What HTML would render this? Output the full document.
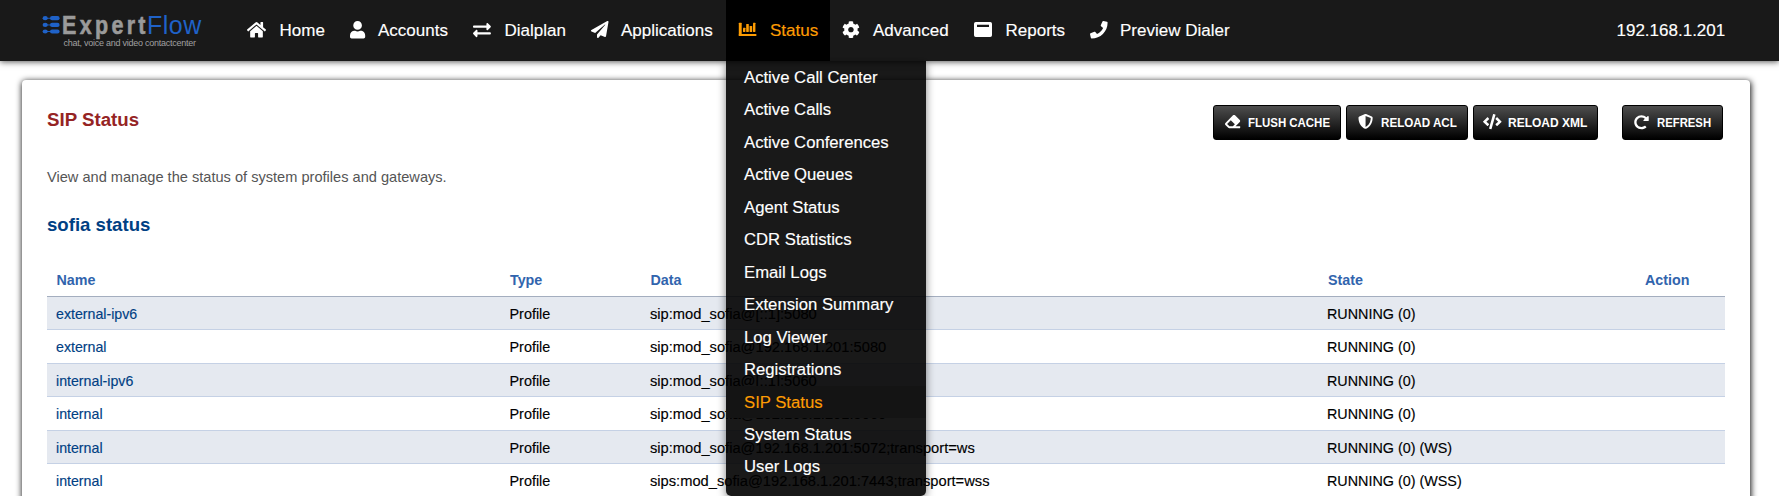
<!DOCTYPE html>
<html><head><meta charset="utf-8">
<style>
html,body{margin:0;padding:0;}
body{width:1779px;height:496px;overflow:hidden;background:#fff;position:relative;font-family:"Liberation Sans",sans-serif;}
div{position:absolute;white-space:nowrap;}
.ic{position:absolute;fill:#fff;overflow:visible;}
#nav{left:0;top:0;width:1779px;height:61px;background:rgba(0,0,0,0.9);box-shadow:0 1px 6px rgba(0,0,0,0.65);z-index:5;}
#nav .nt{top:21px;line-height:20px;font-size:17px;color:#fff;-webkit-text-stroke:0.15px currentColor;}
#active{left:726px;top:0;width:104px;height:61px;background:#000;}
#card{left:22px;top:80px;width:1728px;height:600px;background:#fff;border-radius:4px;box-shadow:0.5px 1px 6px rgba(0,0,0,0.95);}
.title{left:47px;top:110px;font-size:18.7px;line-height:20px;font-weight:bold;color:#952424;}
.desc{left:47px;top:169px;font-size:14.6px;line-height:16px;color:#555;}
.sofia{left:47px;top:215px;font-size:18.6px;line-height:20px;font-weight:bold;color:#004083;}
.btn{top:105px;height:35px;box-sizing:border-box;border:1px solid #000;border-radius:3px;background:linear-gradient(#4e4e4e,#000);}
.bt{top:115px;line-height:16px;font-size:13px;font-weight:bold;color:#fff;transform-origin:0 0;}
.th{top:271.5px;line-height:16px;font-size:14.3px;font-weight:bold;color:#3164ad;}
.hb{left:47px;top:296px;width:1678px;height:1px;background:#a4aebf;}
.rowbg{left:47px;width:1678px;background:#e5e9f0;}
.rowbd{left:47px;width:1678px;height:1px;background:#c5d1e5;}
.td{line-height:16px;font-size:14.3px;color:#000;-webkit-text-stroke:0.15px currentColor;}
#dd{left:726px;top:61px;width:200px;height:435px;background:rgba(0,0,0,0.9);border-radius:0 0 5px 5px;box-shadow:0 2px 8px rgba(0,0,0,0.5);z-index:4;}
.di{left:18px;font-size:16.7px;color:#fff;line-height:20px;-webkit-text-stroke:0.15px currentColor;}
.ddact{left:0;width:200px;height:32.47px;background:#141414;}
</style></head><body>
<div id="card"></div>
<div class="title">SIP Status</div>
<div class="desc">View and manage the status of system profiles and gateways.</div>
<div class="sofia">sofia status</div>
<div class="btn" style="left:1213px;width:128px"></div><svg class="ic" style="left:1224.8px;top:114.06px;" width="15.2" height="15.09" viewBox="0 0 512 512" preserveAspectRatio="none"><path d="M497.941 273.941c18.745-18.745 18.745-49.137 0-67.882l-160-160c-18.745-18.745-49.136-18.746-67.883 0l-256 256c-18.745 18.745-18.745 49.137 0 67.882l96 96A48.004 48.004 0 0 0 144 480h356c6.627 0 12-5.373 12-12v-40c0-6.627-5.373-12-12-12H355.883l142.058-142.059zm-302.627-62.627l137.373 137.373L265.373 416H150.628l-80-80 124.686-124.686z"/></svg><div class="bt" style="left:1248.1px;transform:scaleX(0.8804)">FLUSH CACHE</div><div class="btn" style="left:1346px;width:122px"></div><svg class="ic" style="left:1358.43px;top:114.4px;" width="15.15" height="14.8" viewBox="0 0 512 512" preserveAspectRatio="none"><path d="M466.5 83.7l-192-80a48.15 48.15 0 0 0-36.9 0l-192 80C27.7 91.1 16 108.6 16 128c0 198.5 114.5 335.7 221.5 380.3 11.8 4.9 25.1 4.9 36.9 0C360.1 472.6 496 349.3 496 128c0-19.4-11.7-36.9-29.5-44.3zM256.1 446.3l-.1-381 175.9 73.3c-3.3 151.4-82.1 261.1-175.8 307.7z"/></svg><div class="bt" style="left:1380.8999999999999px;transform:scaleX(0.8952)">RELOAD ACL</div><div class="btn" style="left:1473px;width:125px"></div><svg class="ic" style="left:1483.4px;top:114.2px;" width="18.6" height="15.3" viewBox="0 0 640 512" preserveAspectRatio="none"><path d="M278.9 511.5l-61-17.7c-6.4-1.8-10-8.5-8.2-14.9L346.2 8.7c1.8-6.4 8.5-10 14.9-8.2l61 17.7c6.4 1.8 10 8.5 8.2 14.9L293.8 503.3c-1.9 6.4-8.5 10.1-14.9 8.2zm-114-112.2l43.5-46.4c4.6-4.9 4.3-12.7-.8-17.2L117 256l90.6-79.7c5.1-4.5 5.5-12.3.8-17.2l-43.5-46.4c-4.5-4.8-12.1-5.1-17-.5L3.8 247.2c-5.1 4.7-5.1 12.8 0 17.5l144.1 135.1c4.9 4.6 12.5 4.4 17-.5zm327.2.6l144.1-135.1c5.1-4.7 5.1-12.8 0-17.5L492.1 112.1c-4.8-4.5-12.4-4.3-17 .5L431.6 159c-4.6 4.9-4.3 12.7.8 17.2L523 256l-90.6 79.7c-5.1 4.5-5.5 12.3-.8 17.2l43.5 46.4c4.5 4.9 12.1 5.1 17 .6z"/></svg><div class="bt" style="left:1508.1px;transform:scaleX(0.9224)">RELOAD XML</div><div class="btn" style="left:1622px;width:101px"></div><svg class="ic" style="left:1634.47px;top:114.77px;" width="14.97" height="14.45" viewBox="0 0 512 512" preserveAspectRatio="none"><path d="M256.455 8c66.269.119 126.437 26.233 170.859 68.685l35.715-35.715C478.149 25.851 504 36.559 504 57.941V192c0 13.255-10.745 24-24 24H345.941c-21.382 0-32.09-25.851-16.971-40.971l41.75-41.75c-30.864-28.899-70.801-44.907-113.23-45.273-92.398-.798-170.283 73.977-169.484 169.442C88.764 348.009 162.184 424 256 424c41.127 0 79.997-14.678 110.629-41.556 4.743-4.161 11.906-3.908 16.368.553l39.662 39.662c4.872 4.872 4.631 12.815-.482 17.433C378.202 479.813 319.926 504 256 504 119.034 504 8.001 392.967 8 256.002 7.999 119.193 119.646 7.755 256.455 8z"/></svg><div class="bt" style="left:1657.1999999999998px;transform:scaleX(0.8705)">REFRESH</div>
<div class="th" style="left:56.5px">Name</div>
<div class="th" style="left:510px">Type</div>
<div class="th" style="left:650.5px">Data</div>
<div class="th" style="left:1328px">State</div>
<div class="th" style="left:1645px">Action</div>
<div class="hb"></div>
<div class="rowbg" style="top:297px;height:32px"></div><div class="rowbd" style="top:329px"></div><div class="rowbd" style="top:363px"></div><div class="rowbg" style="top:364px;height:32px"></div><div class="rowbd" style="top:396px"></div><div class="rowbd" style="top:430px"></div><div class="rowbg" style="top:431px;height:32px"></div><div class="rowbd" style="top:463px"></div><div class="rowbd" style="top:497px"></div>
<div class="td" style="left:56px;top:306.00px;color:#004083;font-size:14.2px">external-ipv6</div><div class="td" style="left:509.5px;top:306.00px;font-size:14.4px">Profile</div><div class="td" style="left:650px;top:306.00px;font-size:14.7px">sip:mod_sofia@[::1]:5080</div><div class="td" style="left:1327px;top:306.00px;font-size:14.35px">RUNNING (0)</div><div class="td" style="left:56px;top:339.40px;color:#004083;font-size:14.2px">external</div><div class="td" style="left:509.5px;top:339.40px;font-size:14.4px">Profile</div><div class="td" style="left:650px;top:339.40px;font-size:14.7px">sip:mod_sofia@192.168.1.201:5080</div><div class="td" style="left:1327px;top:339.40px;font-size:14.35px">RUNNING (0)</div><div class="td" style="left:56px;top:372.80px;color:#004083;font-size:14.2px">internal-ipv6</div><div class="td" style="left:509.5px;top:372.80px;font-size:14.4px">Profile</div><div class="td" style="left:650px;top:372.80px;font-size:14.7px">sip:mod_sofia@[::1]:5060</div><div class="td" style="left:1327px;top:372.80px;font-size:14.35px">RUNNING (0)</div><div class="td" style="left:56px;top:406.30px;color:#004083;font-size:14.2px">internal</div><div class="td" style="left:509.5px;top:406.30px;font-size:14.4px">Profile</div><div class="td" style="left:650px;top:406.30px;font-size:14.7px">sip:mod_sofia@192.168.1.201:5060</div><div class="td" style="left:1327px;top:406.30px;font-size:14.35px">RUNNING (0)</div><div class="td" style="left:56px;top:439.80px;color:#004083;font-size:14.2px">internal</div><div class="td" style="left:509.5px;top:439.80px;font-size:14.4px">Profile</div><div class="td" style="left:650px;top:439.80px;font-size:14.7px">sip:mod_sofia@192.168.1.201:5072;transport=ws</div><div class="td" style="left:1327px;top:439.80px;font-size:14.35px">RUNNING (0) (WS)</div><div class="td" style="left:56px;top:473.20px;color:#004083;font-size:14.2px">internal</div><div class="td" style="left:509.5px;top:473.20px;font-size:14.4px">Profile</div><div class="td" style="left:650px;top:473.20px;font-size:14.7px">sips:mod_sofia@192.168.1.201:7443;transport=wss</div><div class="td" style="left:1327px;top:473.20px;font-size:14.35px">RUNNING (0) (WSS)</div>
<div id="nav">
  <div id="active"></div>
  <svg class="ic" style="left:42px;top:15px" width="20" height="20" viewBox="0 0 20 20">
    <g fill="#1f62c8">
      <ellipse cx="3.2" cy="3.2" rx="2.6" ry="2.1"/><rect x="8" y="1.1" width="9.6" height="4.2" rx="2.1"/><rect x="5" y="2.8" width="4" height="0.9"/>
      <ellipse cx="3.2" cy="9.9" rx="2.6" ry="2.1"/><rect x="8" y="7.8" width="9.6" height="4.2" rx="2.1"/><rect x="5" y="9.5" width="4" height="0.9"/>
      <ellipse cx="3.2" cy="16.5" rx="2.6" ry="2.1"/><rect x="8" y="14.4" width="9.6" height="4.2" rx="2.1"/><rect x="5" y="16.1" width="4" height="0.9"/>
    </g>
  </svg>
  <div style="left:62.3px;top:9.5px;font-size:25px;line-height:30px;font-weight:bold;color:#9a9a9a;letter-spacing:3.86px;-webkit-text-stroke:0.6px #9a9a9a;transform:scaleX(0.86);transform-origin:0 0;">Expert</div><div style="left:147.0px;top:9.5px;font-size:25px;line-height:30px;color:#1f62c8;letter-spacing:0.5px">Flow</div>
  <div style="left:63.5px;top:38px;font-size:9px;line-height:11px;letter-spacing:-0.25px;color:#a0a0a0;">chat, voice and video contactcenter</div>
  <svg class="ic" style="left:247.0px;top:20.61px;" width="19.0" height="17.49" viewBox="0 0 576 512" preserveAspectRatio="none"><path d="M280.37 148.26L96 300.11V464a16 16 0 0 0 16 16l112.06-.29a16 16 0 0 0 15.92-16V368a16 16 0 0 1 16-16h64a16 16 0 0 1 16 16v95.64a16 16 0 0 0 16 16.05L464 480a16 16 0 0 0 16-16V300L295.67 148.26a12.19 12.19 0 0 0-15.3 0zM571.6 251.47L488 182.56V44.05a12 12 0 0 0-12-12h-56a12 12 0 0 0-12 12v72.61L318.47 43a48 48 0 0 0-61 0L4.34 251.47a12 12 0 0 0-1.6 16.9l25.5 31A12 12 0 0 0 45.15 301l235.22-193.74a12.19 12.19 0 0 1 15.3 0L530.9 301a12 12 0 0 0 16.9-1.6l25.5-31a12 12 0 0 0-1.7-16.93z"/></svg><svg class="ic" style="left:349.8px;top:20.9px;" width="15.2" height="17.5" viewBox="0 0 448 512" preserveAspectRatio="none"><path d="M224 256c70.7 0 128-57.3 128-128S294.7 0 224 0 96 57.3 96 128s57.3 128 128 128zm89.6 32h-16.7c-22.2 10.2-46.9 16-72.9 16s-50.6-5.8-72.9-16h-16.7C60.2 288 0 348.2 0 422.4V464c0 26.5 21.5 48 48 48h352c26.5 0 48-21.5 48-48v-41.6c0-74.2-60.2-134.4-134.4-134.4z"/></svg><svg class="ic" style="left:473.2px;top:20.74px;" width="17.9" height="18.12" viewBox="0 0 512 512" preserveAspectRatio="none"><path d="M0 168v-16c0-13.255 10.745-24 24-24h360V80c0-21.367 25.899-32.042 40.971-16.971l80 80c9.372 9.373 9.372 24.569 0 33.941l-80 80C409.956 271.982 384 261.456 384 240v-48H24c-13.255 0-24-10.745-24-24zm488 152H128v-48c0-21.314-25.862-32.08-40.971-16.971l-80 80c-9.372 9.373-9.372 24.569 0 33.941l80 80C102.057 463.997 128 453.437 128 432v-48h360c13.255 0 24-10.745 24-24v-16c0-13.255-10.745-24-24-24z"/></svg><svg class="ic" style="left:590.8px;top:21.0px;" width="17.5" height="17.0" viewBox="0 0 512 512" preserveAspectRatio="none"><path d="M476 3.2L12.5 270.6c-18.1 10.4-15.8 35.6 2.2 43.2L121 358.4l287.3-253.2c5.5-4.9 13.3 2.6 8.6 8.3L176 407v80.5c0 23.6 28.5 32.9 42.5 15.8L282 426l124.6 52.2c14.2 6 30.4-2.9 33-18.2l72-432C515 7.8 493.3-6.8 476 3.2z"/></svg><svg class="ic" style="left:738px;top:22px;fill:#fd9c03" width="20" height="15" viewBox="0 0 20 15"><rect x="0.8" y="0.8" width="2.9" height="13.1" rx="0.5"/><rect x="0.8" y="12.1" width="17.6" height="1.8" rx="0.5"/><rect x="5" y="5.8" width="2.4" height="4.2" rx="0.4"/><rect x="8.2" y="1.9" width="2.6" height="8.1" rx="0.4"/><rect x="11.6" y="4" width="2.6" height="6" rx="0.4"/><rect x="15" y="0.8" width="2.4" height="9.2" rx="0.4"/></svg><svg class="ic" style="left:842.41px;top:20.93px;" width="17.89" height="17.34" viewBox="0 0 512 512" preserveAspectRatio="none"><path d="M487.4 315.7l-42.6-24.6c4.3-23.2 4.3-47 0-70.2l42.6-24.6c4.9-2.8 7.1-8.6 5.5-14-11.1-35.6-30-67.8-54.7-94.6-3.8-4.1-10-5.1-14.8-2.3L380.8 110c-17.9-15.4-38.5-27.3-60.8-35.1V25.8c0-5.6-3.9-10.5-9.4-11.7-36.7-8.2-74.3-7.8-109.2 0-5.5 1.2-9.4 6.1-9.4 11.7V75c-22.2 7.9-42.8 19.8-60.8 35.1L88.7 85.5c-4.9-2.8-11-1.9-14.8 2.3-24.7 26.7-43.6 58.9-54.7 94.6-1.7 5.4.6 11.2 5.5 14L67.3 221c-4.3 23.2-4.3 47 0 70.2l-42.6 24.6c-4.9 2.8-7.1 8.6-5.5 14 11.1 35.6 30 67.8 54.7 94.6 3.8 4.1 10 5.1 14.8 2.3l42.6-24.6c17.9 15.4 38.5 27.3 60.8 35.1v49.2c0 5.6 3.9 10.5 9.4 11.7 36.7 8.2 74.3 7.8 109.2 0 5.5-1.2 9.4-6.1 9.4-11.7v-49.2c22.2-7.9 42.8-19.8 60.8-35.1l42.6 24.6c4.9 2.8 11 1.9 14.8-2.3 24.7-26.7 43.6-58.9 54.7-94.6 1.5-5.5-.7-11.3-5.6-14.1zM256 336c-44.1 0-80-35.9-80-80s35.9-80 80-80 80 35.9 80 80-35.9 80-80 80z"/></svg><svg class="ic" style="left:1089.6px;top:20.8px;" width="17.6" height="17.5" viewBox="0 0 512 512" preserveAspectRatio="none"><path d="M493.4 24.6l-104-24c-11.3-2.6-22.9 3.3-27.5 13.9l-48 112c-4.2 9.8-1.4 21.3 6.9 28l60.6 49.6c-36 76.7-98.9 140.5-177.2 177.2l-49.6-60.6c-6.8-8.3-18.2-11.1-28-6.9l-112 48C3.9 366.5-2 378.1.6 389.4l24 104C27.1 504.2 36.7 512 48 512c256.1 0 464-207.5 464-464 0-11.2-7.7-20.9-18.6-23.4z"/></svg><svg class="ic" style="left:974px;top:22px" width="18" height="15" viewBox="0 0 18 15"><path fill-rule="evenodd" d="M1.8 0h14.4A1.8 1.8 0 0 1 18 1.8v11.4a1.8 1.8 0 0 1-1.8 1.8H1.8A1.8 1.8 0 0 1 0 13.2V1.8A1.8 1.8 0 0 1 1.8 0zM3 2.8v2.2h12V2.8z"/></svg>
  <div class="nt" style="left:279.5px">Home</div><div class="nt" style="left:378px">Accounts</div><div class="nt" style="left:504.5px">Dialplan</div><div class="nt" style="left:621px">Applications</div><div class="nt" style="left:770px;color:#fd9c03">Status</div><div class="nt" style="left:873px">Advanced</div><div class="nt" style="left:1005.5px">Reports</div><div class="nt" style="left:1120px">Preview Dialer</div><div class="nt" style="left:1616.5px">192.168.1.201</div>
</div>
<div id="dd">
<div class="di" style="top:6.80px">Active Call Center</div><div class="di" style="top:39.27px">Active Calls</div><div class="di" style="top:71.74px">Active Conferences</div><div class="di" style="top:104.21px">Active Queues</div><div class="di" style="top:136.68px">Agent Status</div><div class="di" style="top:169.15px">CDR Statistics</div><div class="di" style="top:201.62px">Email Logs</div><div class="di" style="top:234.09px">Extension Summary</div><div class="di" style="top:266.56px">Log Viewer</div><div class="di" style="top:299.03px">Registrations</div><div class="ddact" style="top:325.00px"></div><div class="di" style="top:331.50px;color:#fd9c03">SIP Status</div><div class="di" style="top:363.97px">System Status</div><div class="di" style="top:396.44px">User Logs</div>
</div>
</body></html>
